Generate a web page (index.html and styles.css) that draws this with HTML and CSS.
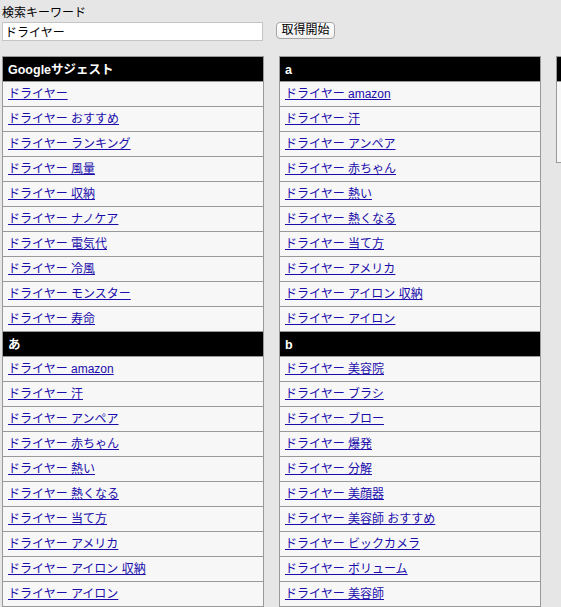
FILE: index.html
```html
<!DOCTYPE html>
<html lang="ja">
<head>
<meta charset="utf-8">
<title>サジェスト取得</title>
<link rel="stylesheet" href="styles.css">
</head>
<body>
<div class="page">
  <div class="label">検索キーワード</div>
  <div class="form">
    <input class="keyword" type="text" value="ドライヤー">
    <button class="fetch" type="button">取得開始</button>
  </div>
  <div class="columns">
    <div class="column">
      <div class="head">Googleサジェスト</div>
      <div class="item"><a href="#">ドライヤー</a></div>
      <div class="item"><a href="#">ドライヤー おすすめ</a></div>
      <div class="item"><a href="#">ドライヤー ランキング</a></div>
      <div class="item"><a href="#">ドライヤー 風量</a></div>
      <div class="item"><a href="#">ドライヤー 収納</a></div>
      <div class="item"><a href="#">ドライヤー ナノケア</a></div>
      <div class="item"><a href="#">ドライヤー 電気代</a></div>
      <div class="item"><a href="#">ドライヤー 冷風</a></div>
      <div class="item"><a href="#">ドライヤー モンスター</a></div>
      <div class="item"><a href="#">ドライヤー 寿命</a></div>
      <div class="head">あ</div>
      <div class="item"><a href="#">ドライヤー amazon</a></div>
      <div class="item"><a href="#">ドライヤー 汗</a></div>
      <div class="item"><a href="#">ドライヤー アンペア</a></div>
      <div class="item"><a href="#">ドライヤー 赤ちゃん</a></div>
      <div class="item"><a href="#">ドライヤー 熱い</a></div>
      <div class="item"><a href="#">ドライヤー 熱くなる</a></div>
      <div class="item"><a href="#">ドライヤー 当て方</a></div>
      <div class="item"><a href="#">ドライヤー アメリカ</a></div>
      <div class="item"><a href="#">ドライヤー アイロン 収納</a></div>
      <div class="item"><a href="#">ドライヤー アイロン</a></div>
    </div>
    <div class="column">
      <div class="head">a</div>
      <div class="item"><a href="#">ドライヤー amazon</a></div>
      <div class="item"><a href="#">ドライヤー 汗</a></div>
      <div class="item"><a href="#">ドライヤー アンペア</a></div>
      <div class="item"><a href="#">ドライヤー 赤ちゃん</a></div>
      <div class="item"><a href="#">ドライヤー 熱い</a></div>
      <div class="item"><a href="#">ドライヤー 熱くなる</a></div>
      <div class="item"><a href="#">ドライヤー 当て方</a></div>
      <div class="item"><a href="#">ドライヤー アメリカ</a></div>
      <div class="item"><a href="#">ドライヤー アイロン 収納</a></div>
      <div class="item"><a href="#">ドライヤー アイロン</a></div>
      <div class="head">b</div>
      <div class="item"><a href="#">ドライヤー 美容院</a></div>
      <div class="item"><a href="#">ドライヤー ブラシ</a></div>
      <div class="item"><a href="#">ドライヤー ブロー</a></div>
      <div class="item"><a href="#">ドライヤー 爆発</a></div>
      <div class="item"><a href="#">ドライヤー 分解</a></div>
      <div class="item"><a href="#">ドライヤー 美顔器</a></div>
      <div class="item"><a href="#">ドライヤー 美容師 おすすめ</a></div>
      <div class="item"><a href="#">ドライヤー ビックカメラ</a></div>
      <div class="item"><a href="#">ドライヤー ボリューム</a></div>
      <div class="item"><a href="#">ドライヤー 美容師</a></div>
    </div>
    <div class="column">
      <div class="head"></div>
      <div class="empty"></div>
    </div>
  </div>
</div>
</body>
</html>
```
FILE: styles.css
```css
html, body {
  margin: 0;
  padding: 0;
  background: #e6e6e6;
}
body {
  font-family: "Liberation Sans", "Noto Sans CJK JP", sans-serif;
  font-size: 12px;
  color: #000;
  overflow: hidden;
}
.page {
  padding: 4px 0 0 2px;
}
.label {
  line-height: 18px;
  height: 18px;
}
.form {
  display: flex;
  align-items: flex-start;
  gap: 13px;
}
.keyword {
  box-sizing: border-box;
  width: 261px;
  height: 19px;
  margin: 0;
  padding: 0 2px;
  border: 1px solid #c4c4c4;
  background: #fff;
  font-family: inherit;
  font-size: 12px;
  color: #000;
}
.fetch {
  box-sizing: border-box;
  height: 17px;
  width: 59px;
  margin: 0;
  padding: 0;
  border: 1px solid #a6a6a6;
  border-radius: 4px;
  background: linear-gradient(#ffffff, #f1f1f1);
  font-family: inherit;
  font-size: 12px;
  line-height: 15px;
  color: #000;
}
.columns {
  display: flex;
  align-items: flex-start;
  gap: 15px;
  margin-top: 15px;
  width: 900px;
}
.column {
  flex: 0 0 auto;
  box-sizing: border-box;
  width: 262px;
  border: 1px solid #999;
  border-bottom: none;
  background: #f7f7f7;
}
.head {
  box-sizing: border-box;
  height: 25px;
  line-height: 24px;
  padding: 1px 0 0 5px;
  background: #000;
  color: #fff;
  font-weight: bold;
  font-size: 12.5px;
  border-bottom: 1px solid #999;
}
.item {
  box-sizing: border-box;
  height: 25px;
  line-height: 23px;
  padding: 1px 0 0 5px;
  border-bottom: 1px solid #999;
}
.item a {
  color: #1a0dab;
  text-decoration: underline;
}
.empty {
  height: 80px;
  border-bottom: 1px solid #999;
}
```
